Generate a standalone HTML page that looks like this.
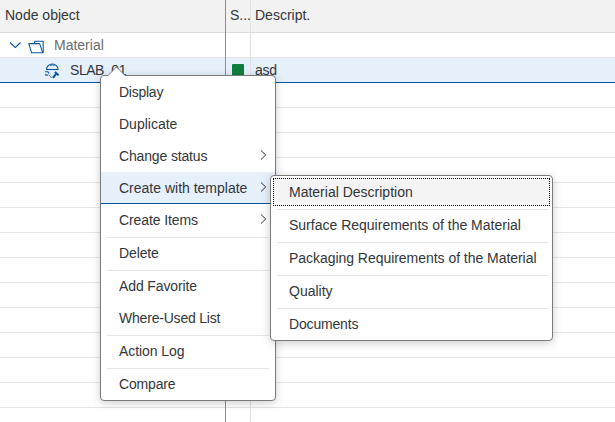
<!DOCTYPE html>
<html><head><meta charset="utf-8">
<style>
*{margin:0;padding:0;box-sizing:border-box}
html,body{width:615px;height:422px;overflow:hidden;background:#fff}
body{position:relative;font-family:"Liberation Sans",sans-serif;font-size:14px;color:#32363a}
.a{position:absolute}
.t{position:absolute;line-height:16px;white-space:nowrap}
.hl{position:absolute;left:0;width:615px;height:1px;background:#e5e5e5}
</style></head><body>
<!-- header -->
<div class="a" style="left:0;top:0;width:615px;height:32px;background:#f2f2f2"></div>
<div class="a" style="left:0;top:32px;width:615px;height:1px;background:#dcdcdc"></div>
<div class="t" style="left:5px;top:7px">Node object</div>
<div class="t" style="left:230px;top:7px">S...</div>
<div class="t" style="left:255px;top:7px">Descript.</div>

<!-- selected row -->
<div class="a" style="left:0;top:58px;width:615px;height:24px;background:#e5f0fa"></div>
<div class="a" style="left:0;top:82px;width:615px;height:1px;background:#0854a0"></div>

<!-- row lines -->
<div class="hl" style="top:57px"></div>
<div class="hl" style="top:107px"></div>
<div class="hl" style="top:132px"></div>
<div class="hl" style="top:157px"></div>
<div class="hl" style="top:182px"></div>
<div class="hl" style="top:207px"></div>
<div class="hl" style="top:232px"></div>
<div class="hl" style="top:257px"></div>
<div class="hl" style="top:282px"></div>
<div class="hl" style="top:307px"></div>
<div class="hl" style="top:332px"></div>
<div class="hl" style="top:357px"></div>
<div class="hl" style="top:382px"></div>
<div class="hl" style="top:407px"></div>

<!-- column dividers -->
<div class="a" style="left:225px;top:0;width:1px;height:422px;background:#8c8c8c"></div>
<div class="a" style="left:250px;top:0;width:1px;height:422px;background:#e0e0e0"></div>

<!-- row 1 -->
<svg class="a" style="left:0;top:33px" width="60" height="24" viewBox="0 33 60 24">
  <polyline points="10,42.5 15.3,47.5 20.6,42.5" fill="none" stroke="#0854a0" stroke-width="1.1"/>
  <path d="M34.3 43.2 L35 41.3 L43.2 41.3 L43.2 52.8" fill="none" stroke="#0854a0" stroke-width="1.05"/>
  <path d="M28.8 43.6 L39.6 43.6 L42.8 52.8 L31.6 52.8 Z" fill="none" stroke="#0854a0" stroke-width="1.05" stroke-linejoin="round"/>
</svg>
<div class="t" style="left:54px;top:37px;color:#6a6d70">Material</div>

<!-- row 2 -->
<svg class="a" style="left:43px;top:61px" width="18" height="18" viewBox="0 0 18 18">
  <path d="M3.5 8.5 A5.8 5.6 0 0 1 15.1 8.5" fill="none" stroke="#0854a0" stroke-width="1.05"/>
  <path d="M6.9 4.5 Q9.3 3.3 11.7 4.5" fill="none" stroke="#0854a0" stroke-width="0.9"/>
  <line x1="3.1" y1="8.5" x2="15.4" y2="8.5" stroke="#0854a0" stroke-width="1.1"/>
  <path d="M5.8 9.8 L9.3 16.4 L12.6 9.9" fill="none" stroke="#0854a0" stroke-width="0.5" opacity="0.3"/>
  <path d="M2.1 10.8 L4.8 10.8 L5.9 12.4" fill="none" stroke="#0854a0" stroke-width="1.1"/>
  <path d="M2.1 13.6 L4.8 14.4" fill="none" stroke="#0854a0" stroke-width="1.1"/>
  <path d="M5.2 13.4 L8.8 17" fill="none" stroke="#0854a0" stroke-width="1" opacity="0.75"/>
  <path d="M10 16.8 L13.2 12.8" fill="none" stroke="#0854a0" stroke-width="2"/>
  <path d="M12.6 10.2 L16.3 13.5 L15 15 L11.3 11.7 Z" fill="#0854a0"/>
</svg>
<div class="t" style="left:70px;top:62px;letter-spacing:-0.45px">SLAB_01</div>
<div class="a" style="left:232px;top:64px;width:12px;height:12px;background:#107e3e;border-radius:1px"></div>
<div class="t" style="left:255px;top:62px;letter-spacing:-0.3px">asd</div>

<!-- main menu -->
<div class="a" style="left:100px;top:75px;width:176px;height:326px;background:#fff;border:1px solid #7a7a7a;border-radius:4px;box-shadow:0 2px 10px rgba(0,0,0,0.2)"></div>
<svg class="a" style="left:100px;top:60px" width="40" height="17" viewBox="100 60 40 17">
  <path d="M108 75.5 L116.5 67 L125 75.5" fill="#fff" stroke="#7a7a7a" stroke-width="1"/>
  <rect x="108.5" y="75" width="16" height="2" fill="#fff"/>
</svg>
<div class="a" style="left:101px;top:172px;width:174px;height:31px;background:#e5f0fa"></div>
<div class="a" style="left:101px;top:203px;width:174px;height:1px;background:#0854a0"></div>
<div class="a" style="left:107px;top:237px;width:162px;height:1px;background:#e5e5e5"></div>
<div class="a" style="left:107px;top:270px;width:162px;height:1px;background:#e5e5e5"></div>
<div class="a" style="left:107px;top:335px;width:162px;height:1px;background:#e5e5e5"></div>
<div class="a" style="left:107px;top:368px;width:162px;height:1px;background:#e5e5e5"></div>
<div class="t" style="left:119px;top:84px;letter-spacing:-0.25px">Display</div>
<div class="t" style="left:119px;top:116px">Duplicate</div>
<div class="t" style="left:119px;top:148px;letter-spacing:-0.15px">Change status</div>
<div class="t" style="left:119px;top:180px">Create with template</div>
<div class="t" style="left:119px;top:212px;letter-spacing:-0.1px">Create Items</div>
<div class="t" style="left:119px;top:245px;letter-spacing:-0.12px">Delete</div>
<div class="t" style="left:119px;top:278px;letter-spacing:-0.12px">Add Favorite</div>
<div class="t" style="left:119px;top:310px;letter-spacing:-0.2px">Where-Used List</div>
<div class="t" style="left:119px;top:343px;letter-spacing:-0.08px">Action Log</div>
<div class="t" style="left:119px;top:376px;letter-spacing:-0.17px">Compare</div>
<svg class="a" style="left:255px;top:140px" width="20" height="100" viewBox="255 140 20 100">
  <polyline points="261,150.5 265.7,155 261,159.5" fill="none" stroke="#141618" stroke-width="0.9"/>
  <polyline points="261,182.5 265.7,187 261,191.5" fill="none" stroke="#141618" stroke-width="0.9"/>
  <polyline points="261,214.5 265.7,219 261,223.5" fill="none" stroke="#141618" stroke-width="0.9"/>
</svg>

<!-- submenu -->
<div class="a" style="left:270px;top:175px;width:283px;height:166px;background:#fff;border:1px solid #7a7a7a;border-radius:4px;box-shadow:0 2px 10px rgba(0,0,0,0.2)"></div>
<div class="a" style="left:273px;top:178px;width:277px;height:28px;background:#f4f4f4;border:1px dotted #000"></div>
<div class="a" style="left:277px;top:209px;width:271px;height:1px;background:#e5e5e5"></div>
<div class="a" style="left:277px;top:242px;width:271px;height:1px;background:#e5e5e5"></div>
<div class="a" style="left:277px;top:275px;width:271px;height:1px;background:#e5e5e5"></div>
<div class="a" style="left:277px;top:308px;width:271px;height:1px;background:#e5e5e5"></div>
<div class="t" style="left:289px;top:184px">Material Description</div>
<div class="t" style="left:289px;top:217px">Surface Requirements of the Material</div>
<div class="t" style="left:289px;top:250px;letter-spacing:-0.04px">Packaging Requirements of the Material</div>
<div class="t" style="left:289px;top:283px">Quality</div>
<div class="t" style="left:289px;top:316px;letter-spacing:-0.17px">Documents</div>
</body></html>
